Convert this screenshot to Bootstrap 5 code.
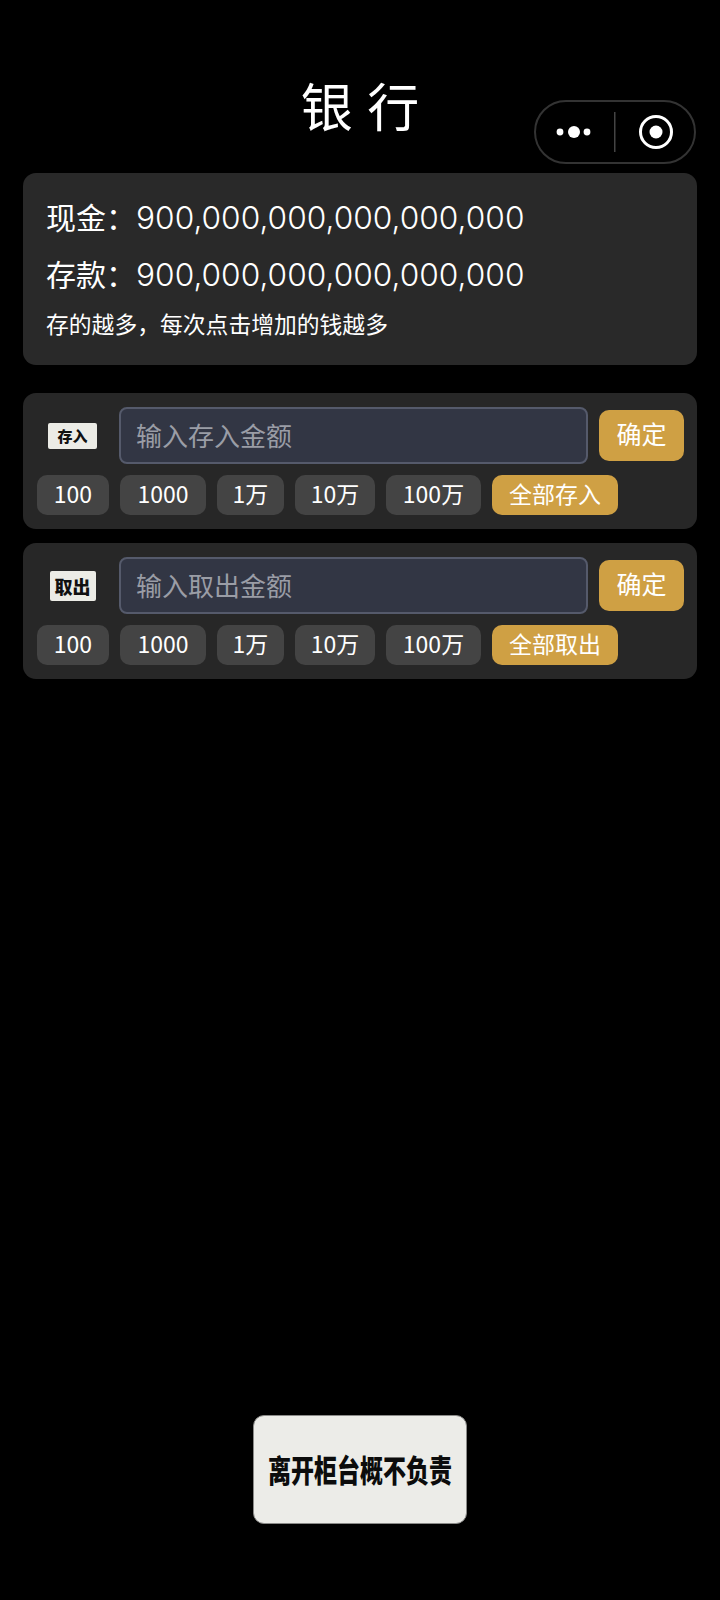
<!DOCTYPE html>
<html lang="zh">
<head>
<meta charset="utf-8">
<title>银行</title>
<link href="https://cdn.jsdelivr.net/npm/bootstrap@5.3.0/dist/css/bootstrap.min.css" rel="stylesheet">
<style>
body{background:#000;color:#fff;font-family:"Noto Sans CJK SC","Noto Sans",sans-serif;}
.bank-page{width:720px;height:1600px;padding:0 23px 76px;position:relative;}
.bank-title{font-size:52px;line-height:60px;padding-top:75px;height:173px;margin:0;font-weight:400;text-align:center;word-spacing:3px;}
.capsule{position:absolute;left:534px;top:100px;width:162px;height:64px;border:2px solid #333;border-radius:32px;}
.capsule svg{display:block;}
.panel-box{background:#292929;border-radius:13px;}
.info-box{height:192px;padding:15px 23px 0;margin-bottom:28px;}
.money-line{font-size:30px;line-height:57px;font-weight:400;height:56.5px;white-space:nowrap;}
.money-num{font-family:"Inter","Noto Sans",sans-serif;font-weight:300;font-size:31.7px;}
.tip-line{font-size:22.8px;line-height:40px;font-weight:400;margin-top:3px;}
.op-box{height:136px;padding:14px 13px 14px 14px;margin-bottom:14px;background:#272727;}
.seal-wrap{width:71px;flex:none;}
.seal{background:#ecece6;color:#111;font-family:"Noto Sans CJK SC",serif;font-weight:900;font-size:15px;border-radius:2px;line-height:1;}
.seal-in{width:49px;height:26px;}
.seal-out{width:46px;height:30px;font-size:18px;}
.amount-input.form-control{width:469px;height:57px;flex:none;background:#323644;border:2px solid #555a6b;border-radius:8px;font-size:26px;padding:0 15px 2px;color:#fff;box-shadow:none;font-weight:400;}
.amount-input.form-control::placeholder{color:#9a9da6;opacity:1;}
.ok-btn.btn{width:85px;height:51px;flex:none;background:#cfa044;border:0;border-radius:10px;color:#fff;font-size:25px;padding:0 0 3px;font-weight:400;}
.chip-btn.btn{height:40px;background:#444;border:0;border-radius:10px;color:#fff;font-size:23px;line-height:36px;padding:0 0 4px;font-weight:400;flex:none;}
.chip-all.btn{background:#cfa044;width:126px;}
.w72{width:72px}.w86{width:86px}.w67{width:67px}.w80{width:80px}.w95{width:95px}
.chip-row{gap:11px;margin-top:11px;}
.row-gap{gap:11px;}
.leave-box{width:214px;height:109px;background:#ecece8;border:1px solid #8a8a88;border-radius:11px;color:#0c0c0c;font-size:23px;font-weight:900;white-space:nowrap;}
.leave-text{display:inline-block;transform:scaleY(1.35);}
</style>
</head>
<body>
<div class="bank-page d-flex flex-column">
  <h1 class="bank-title">银 行</h1>
  <div class="capsule" aria-hidden="true">
    <svg width="158" height="60" viewBox="0 0 158 60">
      <circle cx="24" cy="30" r="3.4" fill="#fff"/><circle cx="38" cy="30" r="6" fill="#fff"/><circle cx="51" cy="30" r="3.4" fill="#fff"/>
      <rect x="78" y="10" width="1.5" height="40" fill="#444"/>
      <circle cx="120" cy="30" r="15.5" fill="none" stroke="#fff" stroke-width="3"/><circle cx="120" cy="30" r="6.5" fill="#fff"/>
    </svg>
  </div>
  <div class="panel-box info-box">
    <div class="money-line">现金：<span class="money-num">900,000,000,000,000,000</span></div>
    <div class="money-line">存款：<span class="money-num">900,000,000,000,000,000</span></div>
    <div class="tip-line">存的越多，每次点击增加的钱越多</div>
  </div>
  <div class="panel-box op-box">
    <div class="d-flex align-items-center row-gap">
      <div class="seal-wrap d-flex justify-content-center"><div class="seal seal-in d-flex align-items-center justify-content-center">存入</div></div>
      <input class="form-control amount-input" type="text" placeholder="输入存入金额">
      <button class="btn ok-btn" type="button">确定</button>
    </div>
    <div class="d-flex chip-row">
      <button class="btn chip-btn w72" type="button">100</button>
      <button class="btn chip-btn w86" type="button">1000</button>
      <button class="btn chip-btn w67" type="button">1万</button>
      <button class="btn chip-btn w80" type="button">10万</button>
      <button class="btn chip-btn w95" type="button">100万</button>
      <button class="btn chip-btn chip-all" type="button">全部存入</button>
    </div>
  </div>
  <div class="panel-box op-box">
    <div class="d-flex align-items-center row-gap">
      <div class="seal-wrap d-flex justify-content-center"><div class="seal seal-out d-flex align-items-center justify-content-center">取出</div></div>
      <input class="form-control amount-input" type="text" placeholder="输入取出金额">
      <button class="btn ok-btn" type="button">确定</button>
    </div>
    <div class="d-flex chip-row">
      <button class="btn chip-btn w72" type="button">100</button>
      <button class="btn chip-btn w86" type="button">1000</button>
      <button class="btn chip-btn w67" type="button">1万</button>
      <button class="btn chip-btn w80" type="button">10万</button>
      <button class="btn chip-btn w95" type="button">100万</button>
      <button class="btn chip-btn chip-all" type="button">全部取出</button>
    </div>
  </div>
  <div class="mt-auto align-self-center leave-box d-flex align-items-center justify-content-center"><span class="leave-text">离开柜台概不负责</span></div>
</div>
<script src="https://cdn.jsdelivr.net/npm/bootstrap@5.3.0/dist/js/bootstrap.bundle.min.js"></script>
</body>
</html>
